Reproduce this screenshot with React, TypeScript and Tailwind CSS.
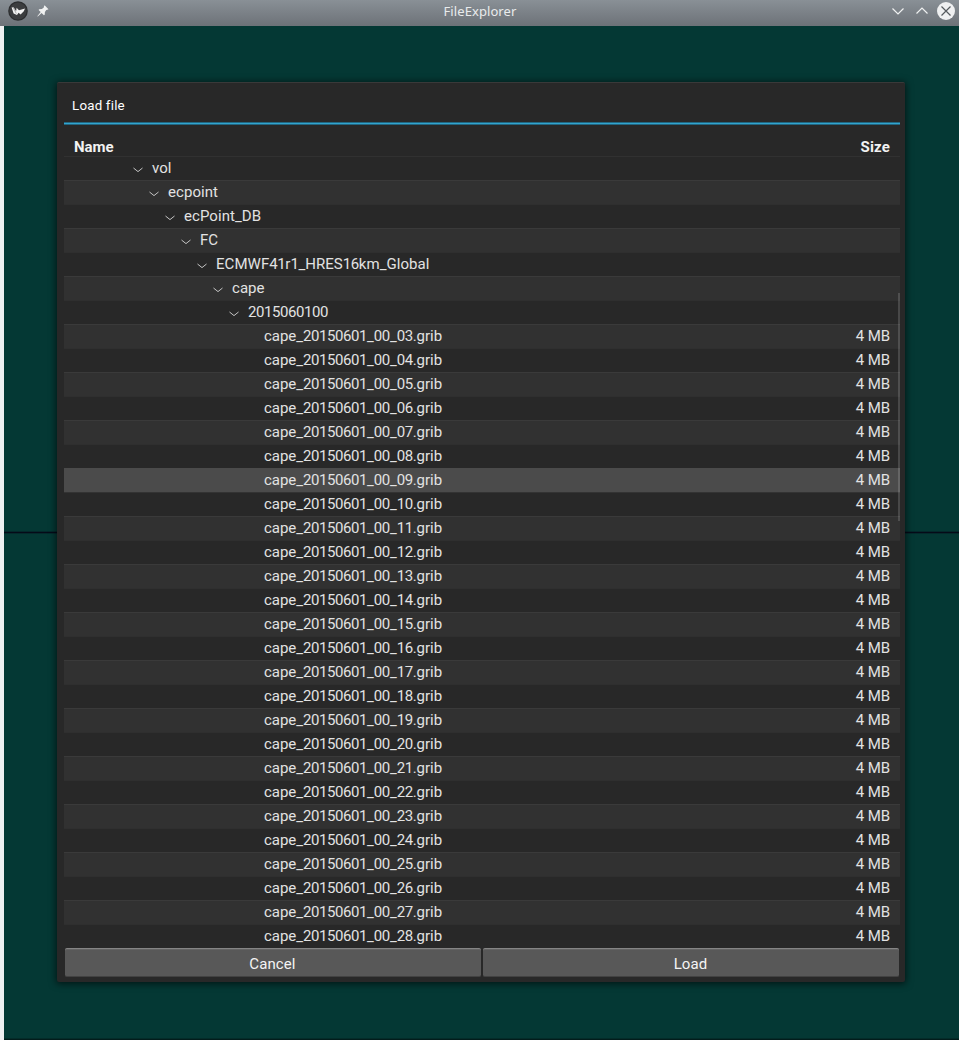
type Row = { name: string; depth: number; folder: boolean };

const folders = ["vol", "ecpoint", "ecPoint_DB", "FC", "ECMWF41r1_HRES16km_Global", "cape", "2015060100"];

const rows: Row[] = [
  ...folders.map((name, i) => ({ name, depth: i, folder: true })),
  ...Array.from({ length: 26 }, (_, i) => ({
    name: `cape_20150601_00_${String(i + 3).padStart(2, "0")}.grib`,
    depth: 7,
    folder: false,
  })),
];

const SELECTED = 13;

function rowClass(i: number) {
  if (i === SELECTED) return "bg-[#4b4b4b] border-t border-[#4b4b4b]";
  if (i % 2 === 1) return "bg-[#313131] border-t border-[#3a3a3a]";
  return i === 0 ? "border-t border-[#313131]" : i === SELECTED + 1 ? "border-t border-[#333333]" : "border-t border-[#2f2f2f]";
}

function Chevron() {
  return (
    <svg width="10" height="6" viewBox="0 0 10 6" fill="none" stroke="#c4c4c4" strokeWidth="1" className="mt-[4px] shrink-0">
      <path d="M0.5 1 L5 4.6 L9.5 1" />
    </svg>
  );
}

/* Digits are set slightly tighter than letters. */
function Name({ text, folder }: { text: string; folder: boolean }) {
  return (
    <span className={folder ? "tracking-[0.05px]" : "tracking-[-0.03px]"}>
      {text.split(/(\d+)/).map((part, i) =>
        i % 2 === 1 ? (
          <span key={i} className="tracking-[-0.42px]">
            {part}
          </span>
        ) : (
          part
        ),
      )}
    </span>
  );
}

function TitleBar() {
  return (
    <header className="grid h-[26px] shrink-0 grid-cols-[1fr_auto_1fr] items-center bg-linear-to-b from-[#899096] to-[#6d7278]">
      <div className="flex h-[26px] items-start pl-[8px]">
        <svg width="20" height="22" viewBox="0 0 20 22">
          <circle cx="10" cy="11" r="9.8" fill="#2c2e30" />
          <circle cx="10" cy="11" r="8.6" fill="#3b3d3f" />
          <path d="M3.6 7.6 L5.6 7.2 L8.1 11.3 L8.6 7.8 L11 10.2 L17 8.6 L15.8 11.2 L12.6 14.6 L10.6 12.8 L9 15 L5.6 13.6 Z" fill="#f3f3f3" />
          <path d="M5 7 L8.3 13.6" stroke="#8c8e90" strokeWidth="0.7" />
        </svg>
        <svg width="12" height="12" viewBox="0 0 12 12" className="mt-[5px] ml-[9px]">
          <path d="M7.6 0.3 L11.5 4.2 L10.3 4.8 L9.3 5.1 L7.9 7 L7.7 9.8 L6.9 10.2 L4.6 7.9 L0.8 11.5 L0.3 11.2 L3.7 7.1 L1.6 5 L2.1 4.2 L4.9 4 L6.8 2.6 L7 1.3 Z" fill="#f0f1f1" />
        </svg>
      </div>
      <h1 className="-mt-[5px] pl-[1px] font-['Noto_Sans',sans-serif] text-[13px] leading-[18px] tracking-[0.08px] text-[#e9ebec]">FileExplorer</h1>
      <div className="flex h-[26px] items-start justify-end pr-[4px] pt-[1px]">
        <svg width="66" height="20" viewBox="0 0 66 20" fill="none" stroke="#f0f1f1" strokeWidth="1.2">
          <path d="M3.5 7.5 L9 13 L14.5 7.5" />
          <path d="M27.5 12.5 L33 7 L38.5 12.5" />
          <circle cx="57" cy="10" r="9" fill="#eff0f1" stroke="none" />
          <path d="M52.5 5.5 L61.5 14.5 M61.5 5.5 L52.5 14.5" stroke="#555a5e" />
        </svg>
      </div>
    </header>
  );
}

function DialogButton({ label }: { label: string }) {
  return (
    <button className="h-[29px] flex-1 rounded-[2px] border-t border-b border-t-[#858585] border-b-[#424242] bg-[#585858] pt-[3px] pr-[1px] text-[15px] leading-[24px] tracking-[0.1px] text-[#f4f4f4] shadow-[inset_0_1px_0_#646464]">
      {label}
    </button>
  );
}

export default function App() {
  return (
    <div className="flex h-[1040px] w-[959px] flex-col overflow-hidden font-[Roboto,sans-serif]">
      <TitleBar />
      <main className="relative flex flex-1 justify-start border-l-4 border-[#eff0f1] bg-[#043834] pt-[56px] pl-[53px]">
        <div className="absolute inset-x-0 top-[505px] h-[3px] border-y border-[#04292b] bg-[#050a18]" />
        <div className="absolute inset-x-0 bottom-0 h-[2px] border-b border-[#021c1b] bg-[#032c29]" />
        <section className="relative flex h-[900px] w-[848px] flex-col rounded-[2px] border-t border-[#393939] bg-[#282828] px-[7px] shadow-[0_1px_7px_1px_rgba(0,0,0,0.6)]">
          <div className="flex h-[39px] items-center pt-[6px] pl-[8px] text-[13.33px] tracking-[0.2px] text-white">Load file</div>
          <div className="h-[3px] w-[836px] shrink-0 border-y border-[#226782] bg-[#32a4ce]" />
          <div className="flex h-[31px] w-[836px] shrink-0 items-end justify-between px-[10px] pb-[1px] text-[15px] leading-[16px] font-bold text-[#f2f2f2]">
            <span>Name</span>
            <span className="tracking-[0.15px]">Size</span>
          </div>
          <div className="relative w-[836px]">
            {rows.map((row, i) => (
              <div key={row.name} className={`flex h-6 items-center pr-[10px] pb-[1px] text-[15px] leading-[22px] text-[#e2e2e2] ${rowClass(i)}`}>
                <div className="flex flex-1 items-center gap-[9px]" style={{ paddingLeft: row.folder ? 69 + row.depth * 16 : 200 }}>
                  {row.folder && <Chevron />}
                  <Name text={row.name} folder={row.folder} />
                </div>
                {!row.folder && <span className="tracking-[-0.1px]">4 MB</span>}
              </div>
            ))}
            <div className="absolute top-[137px] right-0 h-[228px] w-[2px] bg-white/15" />
          </div>
          <div className="flex w-[836px] gap-[2px] px-px">
            <DialogButton label="Cancel" />
            <DialogButton label="Load" />
          </div>
        </section>
      </main>
    </div>
  );
}
